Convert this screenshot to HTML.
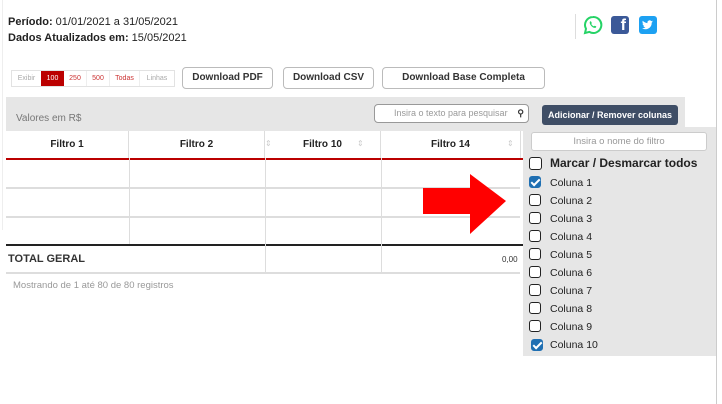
<!DOCTYPE html>
<html><head><style>
*{box-sizing:border-box;margin:0;padding:0}
body{width:722px;height:404px;background:#fff;font-family:"Liberation Sans",sans-serif;position:relative;overflow:hidden;color:#222}
.a{position:absolute}
.btn{position:absolute;border:1px solid #bbb;border-radius:4px;background:#fff;font-size:10px;font-weight:bold;color:#333;text-align:center;line-height:20px;height:22px;white-space:nowrap}
.th{position:absolute;top:131px;height:27px;font-size:10px;font-weight:bold;text-align:center;line-height:27px;border-right:1px solid #ddd}
.cb{position:absolute;left:529px;width:12px;height:12px;border:1.5px solid #222;border-radius:3px;background:#fff}
.cb.on{background:#1f6fb2;border-color:#1f6fb2}
.cb.on:after{content:"";position:absolute;left:3px;top:0px;width:3px;height:7px;border:solid #fff;border-width:0 2px 2px 0;transform:rotate(45deg)}
.lb{position:absolute;left:550px;font-size:10.5px;color:#222}
.hl{position:absolute;left:6px;width:514px;height:1px;background:#ddd}
.vl{position:absolute;width:1px;background:#ddd}
</style></head><body>
<div class="a" style="left:716px;top:0;width:1px;height:404px;background:#ccc"></div>
<div class="a" style="left:2px;top:0;width:1px;height:230px;background:#eee"></div>
<div class="a" style="left:8px;top:14px;font-size:11px;line-height:16px"><b>Período:</b> 01/01/2021 a 31/05/2021<br><b>Dados Atualizados em:</b> 15/05/2021</div>
<div class="a" style="left:575px;top:14px;width:1px;height:25px;background:#ddd"></div>
<svg class="a" style="left:583px;top:15px" width="20" height="20" viewBox="0 0 20 20"><path d="M10 2a8 8 0 0 0-7 11.8L2 18l4.3-1.1A8 8 0 1 0 10 2z" fill="none" stroke="#25d366" stroke-width="2"/><path d="M7 6.5c.5-.5 1-.3 1.2.2l.6 1.3c0 .4-.6.8-.5 1 .5 1 1.4 1.8 2.4 2.3.3.1.6-.6 1-.6l1.3.6c.4.3.3.9-.2 1.3-2.5 1.5-7.3-3.5-5.8-6.1z" fill="#25d366"/></svg>
<div class="a" style="left:611px;top:16px;width:18px;height:18px;background:#3b5998;border-radius:3px;color:#fff;font-weight:bold;font-size:16px;line-height:20px;text-align:right;padding-right:3px">f</div>
<div class="a" style="left:639px;top:16px;width:18px;height:18px;background:#1da1f2;border-radius:3px"><svg width="18" height="18" viewBox="0 0 18 18"><path d="M14 5.5c-.4.2-.9.3-1.3.4.5-.3.8-.7 1-1.3-.4.3-1 .4-1.4.5a2.2 2.2 0 0 0-3.8 2A6.4 6.4 0 0 1 3.8 4.8a2.2 2.2 0 0 0 .7 3c-.4 0-.7-.1-1-.3 0 1.1.8 2 1.8 2.2-.3.1-.7.1-1 0 .3.9 1.1 1.5 2.1 1.5A4.5 4.5 0 0 1 3 12.2 6.3 6.3 0 0 0 12.7 6.6z" fill="#fff"/></svg></div>
<div class="a" style="left:11px;top:70px;height:17px;width:164px;border:1px solid #e2e2e2;font-size:7px;display:flex;line-height:15px">
<span style="width:29px;text-align:center;color:#aaa">Exibir</span><span style="width:23px;text-align:center;background:#b00;color:#fff">100</span><span style="width:23px;text-align:center;color:#c33;border-right:1px solid #eee">250</span><span style="width:23px;text-align:center;color:#c33;border-right:1px solid #eee">500</span><span style="width:30px;text-align:center;color:#c33;border-right:1px solid #eee">Todas</span><span style="width:34px;text-align:center;color:#aaa">Linhas</span></div>
<div class="btn" style="left:182px;top:67px;width:91px">Download PDF</div>
<div class="btn" style="left:283px;top:67px;width:91px">Download CSV</div>
<div class="btn" style="left:382px;top:67px;width:163px">Download Base Completa</div>
<div class="a" style="left:6px;top:97px;width:679px;height:34px;background:#e6e6e6"></div>
<div class="a" style="left:16px;top:113px;font-size:10px;color:#777">Valores em R$</div>
<div class="a" style="left:374px;top:104px;width:155px;height:19px;border:1px solid #999;border-radius:4px;background:#fff;font-size:9px;color:#999;line-height:17px;padding-left:19px;white-space:nowrap">Insira o texto para pesquisar <span style="position:absolute;right:4px;top:0;color:#333;font-weight:bold">⚲</span></div>
<div class="a" style="left:542px;top:105px;width:136px;height:20px;background:#3f4e66;border-radius:3px;color:#fff;font-size:9px;font-weight:bold;line-height:20px;text-align:center;white-space:nowrap">Adicionar / Remover colunas</div>
<div class="th" style="left:6px;width:123px">Filtro 1</div>
<div class="th" style="left:129px;width:136px">Filtro 2</div>
<div class="th" style="left:265px;width:116px">Filtro 10</div>
<div class="th" style="left:381px;width:140px">Filtro 14</div>
<div class="a" style="left:265px;top:139px;font-size:8px;color:#ccc">⇕</div>
<div class="a" style="left:357px;top:139px;font-size:8px;color:#ccc">⇕</div>
<div class="a" style="left:507px;top:139px;font-size:8px;color:#ccc">⇕</div>
<div class="a" style="left:6px;top:158px;width:517px;height:2px;background:#b00"></div>
<div class="hl" style="top:187px;height:2px"></div>
<div class="hl" style="top:216px;height:2px"></div>
<div class="a" style="left:6px;top:244px;width:517px;height:2px;background:#222"></div>
<div class="hl" style="top:272px;height:2px"></div>
<div class="vl" style="left:129px;top:158px;height:86px"></div>
<div class="vl" style="left:265px;top:158px;height:115px"></div>
<div class="vl" style="left:381px;top:158px;height:115px"></div>
<div class="a" style="left:8px;top:253px;font-size:11px;font-weight:bold;color:#333">TOTAL GERAL</div>
<div class="a" style="left:502px;top:255px;font-size:8px;color:#333">0,00</div>
<div class="a" style="left:13px;top:280px;font-size:9.5px;color:#999">Mostrando de 1 até 80 de 80 registros</div>
<svg class="a" style="left:422px;top:174px" width="85" height="62"><polygon points="1,14 48,14 48,0 84,27 48,60 48,40 1,40" fill="#f00"/></svg>
<div class="a" style="left:523px;top:127px;width:193px;height:229px;background:#e6e6e6"></div>
<div class="a" style="left:531px;top:132px;width:176px;height:19px;border:1px solid #ccc;border-radius:3px;background:#fff;font-size:9.5px;color:#999;text-align:center;line-height:17px">Insira o nome do filtro</div>
<div class="cb" style="top:157px;width:13px;height:13px"></div><div class="lb" style="top:156px;font-size:12px;font-weight:bold">Marcar / Desmarcar todos</div>
<div class="cb on" style="top:176px"></div><div class="lb" style="top:177px">Coluna 1</div>
<div class="cb" style="top:194px"></div><div class="lb" style="top:195px">Coluna 2</div>
<div class="cb" style="top:212px"></div><div class="lb" style="top:213px">Coluna 3</div>
<div class="cb" style="top:230px"></div><div class="lb" style="top:231px">Coluna 4</div>
<div class="cb" style="top:248px"></div><div class="lb" style="top:249px">Coluna 5</div>
<div class="cb" style="top:266px"></div><div class="lb" style="top:267px">Coluna 6</div>
<div class="cb" style="top:284px"></div><div class="lb" style="top:285px">Coluna 7</div>
<div class="cb" style="top:302px"></div><div class="lb" style="top:303px">Coluna 8</div>
<div class="cb" style="top:320px"></div><div class="lb" style="top:321px">Coluna 9</div>
<div class="cb on" style="top:339px;left:531px"></div><div class="lb" style="top:339px">Coluna 10</div>
</body></html>
